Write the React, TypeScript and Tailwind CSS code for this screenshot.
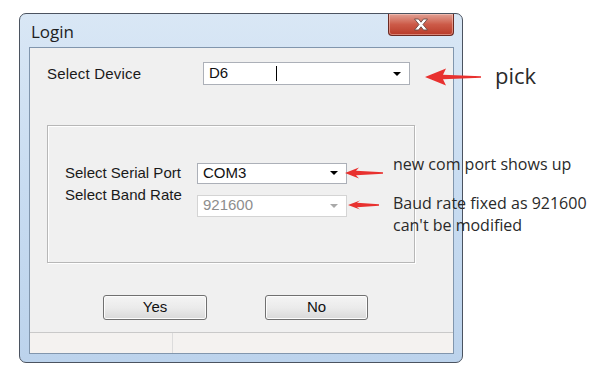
import React from "react";

const ui = { fontFamily: '"Liberation Sans", Arial, sans-serif' };
const note = { fontFamily: '"Open Sans", "Noto Sans", sans-serif' };

function RedArrow({ w, h, className }: { w: number; h: number; className: string }) {
  const m = h / 2;
  const hx = Math.round(h * 1.15);
  return (
    <svg width={w} height={h} viewBox={`0 0 ${w} ${h}`} className={className}>
      <path
        d={`M0 ${m} L${hx} 0.5 L${hx - 3} ${m - 2.2} L${w} ${m - 0.8} L${w} ${m + 0.8} L${hx - 3} ${m + 2.2} L${hx} ${h - 0.5} Z`}
        fill="#e8312f"
      />
    </svg>
  );
}

function Combo({
  value,
  width,
  height,
  disabled,
  cursor,
}: {
  value: string;
  width: string;
  height: string;
  disabled?: boolean;
  cursor?: boolean;
}) {
  return (
    <div
      className={`${width} ${height} relative flex items-center border bg-white pl-[5px] text-[15px] ${
        disabled ? "border-[#d4d4d4] text-[#8d8d8d]" : "border-[#acb0b8] text-[#111]"
      }`}
    >
      <span>{value}</span>
      {cursor && <span className="absolute left-[72px] top-[3px] h-[15px] w-px bg-black" />}
      <span
        className={`ml-auto mr-[8px] h-0 w-0 border-x-[4px] border-t-[4px] border-x-transparent ${
          disabled ? "border-t-[#a9a9a9]" : "border-t-black"
        }`}
      />
    </div>
  );
}

function WinButton({ label, width }: { label: string; width: string }) {
  return (
    <div
      className={`${width} flex h-[25px] items-center justify-center rounded-[3px] border border-[#707070] bg-gradient-to-b from-[#f4f4f4] via-[#ebebeb] to-[#d9d9d9] text-[15px] text-[#111] shadow-[inset_0_0_0_1px_#fcfcfc]`}
    >
      {label}
    </div>
  );
}

export default function App() {
  return (
    <div className="relative h-[380px] w-[601px] overflow-hidden bg-white pl-[19px] pt-[13px]" style={ui}>
      {/* window */}
      <div className="flex h-[350px] w-[444px] flex-col rounded-[7px] border border-[#4b5360] bg-gradient-to-b from-[#d9e7f5] via-[#c8dcf1] to-[#bcd3ec]">
        <div className="flex h-[33px] items-start">
          <span className="pl-[11px] pt-[7px] text-[17px] leading-[22px] text-[#1e1e1e]" style={note}>
            Login
          </span>
          <div className="ml-auto mr-[8px] flex h-[22px] w-[66px] items-center justify-center rounded-b-[4px] border border-t-0 border-[#6b2a22] bg-gradient-to-b from-[#e0a094] via-[#cc5a48] to-[#b83a28] shadow-[inset_0_0_0_1px_rgba(255,220,210,0.45)]">
            <svg width="16" height="13" viewBox="0 0 16 13">
              <path
                d="M1.5 1 H5.5 L8 4.2 L10.5 1 H14.5 L10 6.5 L14.5 12 H10.5 L8 8.8 L5.5 12 H1.5 L6 6.5 Z"
                fill="#ffffff"
                stroke="#6a4a44"
                strokeWidth="0.9"
                strokeLinejoin="round"
              />
            </svg>
          </div>
        </div>

        <div className="flex-1 pb-[8px] pl-[9px] pr-[8px]">
          <div className="flex h-full flex-col border border-[#8196ad] bg-[#f0f0f0]">
            {/* device row */}
            <div className="mt-[14px] flex items-center pl-[17px]">
              <span className="relative top-[1px] w-[156px] text-[15px] tracking-[0.2px] text-[#1a1a1a]">Select Device</span>
              <Combo value="D6" width="w-[207px]" height="h-[23px]" cursor />
            </div>

            {/* group box */}
            <div className="ml-[17px] mt-[40px] h-[138px] w-[368px] border border-[#b7b7b7] pl-[17px] pt-[36px] shadow-[inset_1px_1px_0_#ffffff,1px_1px_0_#ffffff]">
              <div className="flex items-center">
                <span className="w-[132px] text-[15px] text-[#1a1a1a]">Select Serial Port</span>
                <Combo value="COM3" width="w-[150px]" height="h-[21px]" />
              </div>
              <div className="mt-[10px] flex items-start">
                <span className="-mt-[9px] w-[132px] text-[15px] leading-[18px] text-[#1a1a1a]">Select Band Rate</span>
                <Combo value="921600" width="w-[150px]" height="h-[22px]" disabled />
              </div>
            </div>

            {/* buttons */}
            <div className="mt-[32px] flex gap-[58px] pl-[73px]">
              <WinButton label="Yes" width="w-[104px]" />
              <WinButton label="No" width="w-[103px]" />
            </div>

            {/* status bar */}
            <div className="mt-auto flex h-[21px] border-t border-[#c9c9c9] bg-[#f4f2f0]">
              <div className="w-[143px] border-r border-[#dcdcdc]" />
              <div className="flex-1" />
            </div>
          </div>
        </div>
      </div>

      {/* annotations */}
      <RedArrow w={56} h={18} className="absolute left-[425px] top-[68px]" />
      <span className="absolute left-[495px] top-[60px] text-[22px] leading-[30px] text-[#2a2a2a]" style={note}>
        pick
      </span>

      <RedArrow w={38} h={12} className="absolute left-[345px] top-[167px]" />
      <RedArrow w={31} h={10} className="absolute left-[348px] top-[200px]" />

      <div className="absolute left-[393px] top-[154px] text-[16px] leading-[21px] text-[#2a2a2a]" style={note}>
        new com port shows up
      </div>
      <div className="absolute left-[393px] top-[192px] text-[16px] leading-[22px] text-[#2a2a2a]" style={note}>
        <div>Baud rate fixed as 921600</div>
        <div>can't be modified</div>
      </div>
    </div>
  );
}
